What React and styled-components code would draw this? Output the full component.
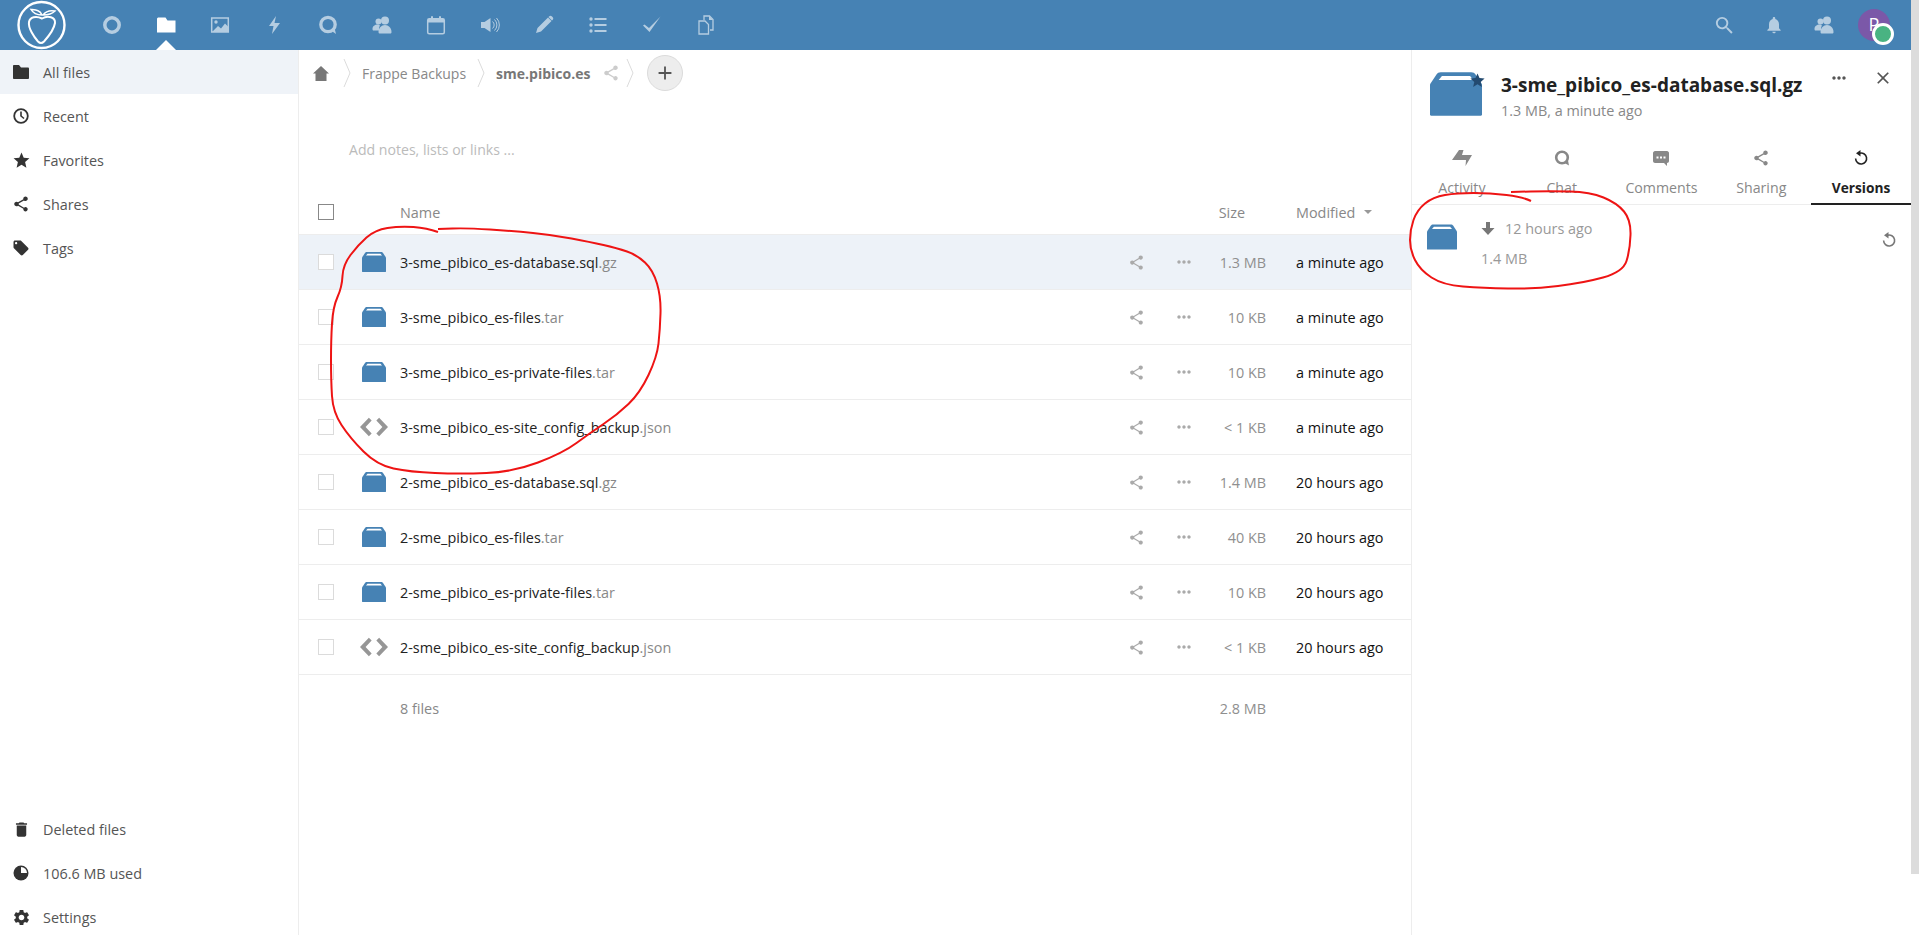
import styled, { createGlobalStyle } from "styled-components";
import {
  MdStar,
  MdShare,
  MdLocalOffer,
  MdDelete,
  MdSettings,
  MdMoreHoriz,
  MdClose,
  MdAdd,
  MdSearch,
  MdNotifications,
} from "react-icons/md";

const GlobalStyle = createGlobalStyle`
  html, body {
    margin: 0;
    padding: 0;
    background: #fff;
  }
  body {
    font-family: "Open Sans", "Noto Sans", sans-serif;
    font-size: 14.4px;
    color: #222;
  }
  * {
    box-sizing: border-box;
  }
`;

const files = [
  { name: "3-sme_pibico_es-database.sql", ext: ".gz", type: "archive", size: "1.3 MB", modified: "a minute ago", selected: true },
  { name: "3-sme_pibico_es-files", ext: ".tar", type: "archive", size: "10 KB", modified: "a minute ago" },
  { name: "3-sme_pibico_es-private-files", ext: ".tar", type: "archive", size: "10 KB", modified: "a minute ago" },
  { name: "3-sme_pibico_es-site_config_backup", ext: ".json", type: "code", size: "< 1 KB", modified: "a minute ago" },
  { name: "2-sme_pibico_es-database.sql", ext: ".gz", type: "archive", size: "1.4 MB", modified: "20 hours ago" },
  { name: "2-sme_pibico_es-files", ext: ".tar", type: "archive", size: "40 KB", modified: "20 hours ago" },
  { name: "2-sme_pibico_es-private-files", ext: ".tar", type: "archive", size: "10 KB", modified: "20 hours ago" },
  { name: "2-sme_pibico_es-site_config_backup", ext: ".json", type: "code", size: "< 1 KB", modified: "20 hours ago" },
];

// red pen marks, page coordinates
const fileLoop = [
  [438, 232], [427, 228], [400, 226], [375, 230], [358, 245], [343, 265], [342, 287], [333, 307],
  [331, 340], [331, 380], [333, 412], [350, 438], [377, 465], [410, 472], [460, 474], [513, 472],
  [563, 453], [590, 433], [617, 415], [640, 393], [657, 357], [660, 330], [661, 297], [653, 270],
  [637, 255], [617, 248], [590, 242], [553, 235], [513, 231], [467, 228], [438, 229],
];
const versionLoop = [
  [1531, 201], [1523, 197], [1490, 193], [1457, 193], [1433, 197], [1417, 210], [1410, 230], [1410, 250],
  [1420, 270], [1443, 285], [1483, 288], [1533, 289], [1583, 283], [1623, 272], [1630, 250], [1631, 220],
  [1617, 203], [1590, 192], [1550, 191], [1511, 192],
];

const smooth = (pts) => {
  let d = `M${pts[0][0]} ${pts[0][1]}`;
  for (let i = 1; i < pts.length - 1; i++) {
    const mx = (pts[i][0] + pts[i + 1][0]) / 2;
    const my = (pts[i][1] + pts[i + 1][1]) / 2;
    d += ` Q${pts[i][0]} ${pts[i][1]} ${mx} ${my}`;
  }
  const last = pts[pts.length - 1];
  return d + ` L${last[0]} ${last[1]}`;
};

const Logo = () => (
  <LogoSvg viewBox="17 0 50 50" fill="none" stroke="#fff" strokeWidth="2">
    <circle cx="41.5" cy="25" r="23" strokeWidth="2.4" />
    <path d="M42 18.5C36 15.5 30 17 29 22c-1 6 5 15 9 19.5 2 2 4 2 6 0 4-4.500 10-11.500 11-18.500.5-6-7-8-13-4.500z" />
    <path d="M42 15c-2-5-6-5-11-5.500 2 3.500 6 5.500 11 5.500zM43 15c3-4 7-5 12-4-3 3-7 4-12 4z" strokeWidth="1.5" />
  </LogoSvg>
);

const AppGlyph = ({ name }) => {
  switch (name) {
    case "dashboard":
      return <circle cx="10" cy="10" r="7.200" fill="none" stroke="currentColor" strokeWidth="3.500" />;
    case "files":
      return <path d="M2 2.500h7.500L11.500 5.500H19.500V17.500H1V3.500z" fill="currentColor" />;
    case "photos":
      return (
        <>
          <rect x="1.700" y="3" width="16.600" height="14" fill="none" stroke="currentColor" strokeWidth="1.500" />
          <circle cx="6" cy="7" r="1.700" fill="currentColor" />
          <path d="M2 17l6-6 3 2.500 4-5 3.500 3.500V17z" fill="currentColor" />
        </>
      );
    case "activity":
      return <path d="M12 1L5 11h4.500L8 19l8-11h-5.500z" fill="currentColor" />;
    case "talk":
      return (
        <>
          <circle cx="10" cy="9.500" r="7.200" fill="none" stroke="currentColor" strokeWidth="3.300" />
          <path d="M13 15.500l5 3.500-1.500-6z" fill="currentColor" />
        </>
      );
    case "contacts":
      return (
        <>
          <circle cx="6.500" cy="6.500" r="3" fill="currentColor" />
          <circle cx="13" cy="5.500" r="4" fill="currentColor" />
          <path d="M.5 14c0-3 2.500-4.500 5-4.500 1 0 2 .5 2.500 1-.5 1-1 2-1 3.500 0 .5 0 1 .5 1.500H1.500C1 15.500.5 15 .5 14z" fill="currentColor" />
          <path d="M6.500 17c0-4 3-7 6.500-7s6.500 3 6.500 7c0 1-.5 1.500-1.500 1.500H8c-1 0-1.500-.5-1.500-1.500z" fill="currentColor" />
        </>
      );
    case "calendar":
      return (
        <>
          <rect x="1.700" y="3.700" width="16.600" height="15" rx="1.500" fill="none" stroke="currentColor" strokeWidth="1.500" />
          <path d="M2 4h16v3.500H2z" fill="currentColor" />
          <rect x="5" y="1" width="2" height="5" rx="1" fill="currentColor" />
          <rect x="13" y="1" width="2" height="5" rx="1" fill="currentColor" />
        </>
      );
    case "announce":
      return (
        <>
          <path d="M1 7h3.500L10.500 3v14l-6-4H1z" fill="currentColor" />
          <path d="M12.500 6.500a4.500 4.500 0 0 1 0 7M14.500 4.500a7.500 7.500 0 0 1 0 11M16.500 3a10 10 0 0 1 0 14" fill="none" stroke="currentColor" strokeWidth="1" />
        </>
      );
    case "notes":
      return <path d="M14 2.500l3.500 3.500-10.500 10.500-5 1.500 1.500-5zM15 1.500c1-1 2-1 3 0l.5.500c1 1 1 2 0 3l-.5.500-3.500-3.500z" fill="currentColor" />;
    case "deck":
      return (
        <>
          <circle cx="3" cy="4" r="1.700" fill="currentColor" />
          <circle cx="3" cy="10" r="1.700" fill="currentColor" />
          <circle cx="3" cy="16" r="1.700" fill="currentColor" />
          <rect x="6.500" y="3" width="12" height="2" fill="currentColor" />
          <rect x="6.500" y="9" width="12" height="2" fill="currentColor" />
          <rect x="6.500" y="15" width="12" height="2" fill="currentColor" />
        </>
      );
    case "tasks":
      return <path d="M1 10.500l1.500-1 4.500 3.500L18.500 1.500 7.500 17z" fill="currentColor" />;
    case "documents":
      return (
        <>
          <path d="M3 6h6l3.500 3.500V19H3z" fill="none" stroke="currentColor" strokeWidth="1.300" />
          <path d="M8 5V1h5.500L17 4.500V15h-3" fill="none" stroke="currentColor" strokeWidth="1.300" />
          <path d="M13 1v4h4" fill="currentColor" />
        </>
      );
    default:
      return null;
  }
};

const apps = ["dashboard", "files", "photos", "activity", "talk", "contacts", "calendar", "announce", "notes", "deck", "tasks", "documents"];

const ArchiveIcon = ({ width, height }) => (
  <svg width={width} height={height} viewBox="0 0 24 20">
    <path d="M5 0h14c1 0 1.500.4 2 1l3 4.500V19.500c0 .3-.2.500-.5.500H.5c-.3 0-.5-.2-.5-.5V5.500L3 1c.5-.6 1-1 2-1z" fill="#4682b4" />
    <path d="M5.500 1.700h13l1.500 1.800H4z" fill="#fff" />
  </svg>
);

const CodeIcon = () => (
  <svg width="30" height="20" viewBox="0 0 30 20" fill="#969696">
    <path d="M9.500 0L0 10l9.500 10 3-3L6 10l6.500-7zM20.500 0L30 10l-9.500 10-3-3L24 10l-6.500-7z" />
  </svg>
);

const RestoreGlyph = ({ size = 16 }) => (
  <svg width={size} height={size} viewBox="0 0 16 16">
    <path d="M6.500 3.200A5.500 5.500 0 1 1 2.600 8.600" fill="none" stroke="currentColor" strokeWidth="1.600" />
    <path d="M7.500 0v6.500L3 3.300z" fill="currentColor" />
  </svg>
);

const ClockIcon = () => (
  <svg width="16" height="16" viewBox="0 0 16 16" fill="none" stroke="currentColor">
    <circle cx="8" cy="8" r="6.800" strokeWidth="1.800" />
    <path d="M8 3.500V8l3 2.500" strokeWidth="1.600" />
  </svg>
);

const FolderIcon = () => (
  <svg width="16" height="14" viewBox="0 0 16 14" fill="currentColor">
    <path d="M0 1c0-.5.400-1 1-1h5l2 2.500h7c.5 0 1 .5 1 1V13c0 .5-.5 1-1 1H1c-.6 0-1-.5-1-1z" />
  </svg>
);

const QuotaIcon = () => (
  <svg width="16" height="16" viewBox="0 0 16 16">
    <circle cx="8" cy="8" r="7.500" fill="currentColor" />
    <path d="M8 2a6 6 0 0 1 6 6H8z" fill="#fff" />
  </svg>
);

const navTop = [
  { label: "All files", icon: <FolderIcon />, active: true },
  { label: "Recent", icon: <ClockIcon /> },
  { label: "Favorites", icon: <MdStar size={19} /> },
  { label: "Shares", icon: <MdShare size={18} /> },
  { label: "Tags", icon: <MdLocalOffer size={18} /> },
];

const navBottom = [
  { label: "Deleted files", icon: <MdDelete size={19} /> },
  { label: "106.6 MB used", icon: <QuotaIcon /> },
  { label: "Settings", icon: <MdSettings size={19} /> },
];

const tabs = [
  {
    label: "Activity",
    icon: (
      <svg width="20" height="16" viewBox="0 0 20 16" fill="currentColor">
        <path d="M7 0h4.500L10 5h10l-6.500 11 .5-6H0z" />
      </svg>
    ),
  },
  {
    label: "Chat",
    icon: (
      <svg width="16" height="16" viewBox="0 0 16 16">
        <circle cx="8" cy="7.500" r="5.800" fill="none" stroke="currentColor" strokeWidth="2.600" />
        <path d="M10.500 13l4.500 2.500-1-5z" fill="currentColor" />
      </svg>
    ),
  },
  {
    label: "Comments",
    icon: (
      <svg width="16" height="15" viewBox="0 0 16 15">
        <path d="M2 0h12c1 0 2 1 2 2v8c0 1-1 2-2 2v3l-3-3H2c-1 0-2-1-2-2V2C0 1 1 0 2 0z" fill="currentColor" />
        <path d="M3.500 5.500h2v2h-2zM7 5.500h2v2H7zM10.500 5.500h2v2h-2z" fill="#fff" />
      </svg>
    ),
  },
  { label: "Sharing", icon: <MdShare size={18} /> },
  { label: "Versions", icon: <RestoreGlyph />, active: true },
];

const App = () => {
  return (
    <Page>
      <GlobalStyle />
      <TopBar>
        <AppNav>
          <Logo />
          <AppList>
            {apps.map((name) => (
              <AppItem key={name} $active={name === "files"}>
                <svg width="20" height="20" viewBox="0 0 20 20">
                  <AppGlyph name={name} />
                </svg>
              </AppItem>
            ))}
          </AppList>
        </AppNav>
        <UserNav>
          <UserItem><MdSearch size={23} /></UserItem>
          <UserItem><MdNotifications size={20} /></UserItem>
          <UserItem>
            <svg width="20" height="20" viewBox="0 0 20 20">
              <AppGlyph name="contacts" />
            </svg>
          </UserItem>
          <Avatar>
            P
            <StatusDot />
          </Avatar>
        </UserNav>
      </TopBar>

      <Body>
        <Sidebar>
          <NavList>
            {navTop.map((item) => (
              <NavItem key={item.label} $active={item.active}>
                <NavIcon>{item.icon}</NavIcon>
                {item.label}
              </NavItem>
            ))}
          </NavList>
          <NavFooter>
            {navBottom.map((item) => (
              <NavItem key={item.label}>
                <NavIcon>{item.icon}</NavIcon>
                {item.label}
              </NavItem>
            ))}
          </NavFooter>
        </Sidebar>

        <Main>
          <Breadcrumb>
            <Crumb>
              <HomeIcon width="16" height="15" viewBox="0 0 16 15">
                <path d="M8 0l8 7.500h-2.500V15h-11V7.500H0z" />
              </HomeIcon>
              <Chevron />
            </Crumb>
            <Crumb>
              <CrumbText>Frappe Backups</CrumbText>
              <Chevron />
            </Crumb>
            <Crumb>
              <CrumbText $current>sme.pibico.es</CrumbText>
              <CrumbShare><MdShare size={18} /></CrumbShare>
              <Chevron />
            </Crumb>
            <NewButton><MdAdd size={22} /></NewButton>
          </Breadcrumb>

          <Notes>Add notes, lists or links ...</Notes>

          <HeadRow>
            <HeadCheck />
            <span />
            <HeadLabel>Name</HeadLabel>
            <span />
            <span />
            <SizeHead>Size</SizeHead>
            <ModifiedHead>
              Modified
              <SortCaret />
            </ModifiedHead>
          </HeadRow>

          {files.map((file) => (
            <FileRow key={file.name} $selected={file.selected}>
              <RowCheck />
              <FileIconCell>
                {file.type === "code" ? <CodeIcon /> : <ArchiveIcon width={24} height={20} />}
              </FileIconCell>
              <FileName>
                {file.name}
                <FileExt>{file.ext}</FileExt>
              </FileName>
              <RowAction><MdShare size={17} /></RowAction>
              <RowAction><MdMoreHoriz size={20} /></RowAction>
              <FileSize>{file.size}</FileSize>
              <FileDate>{file.modified}</FileDate>
            </FileRow>
          ))}

          <SummaryRow>
            <span />
            <span />
            <SummaryText>8 files</SummaryText>
            <span />
            <span />
            <FileSize>2.8 MB</FileSize>
            <span />
          </SummaryRow>
        </Main>

        <Details>
          <DetailsHeader>
            <BigIcon>
              <ArchiveIcon width={52} height={44} />
              <BigStar><MdStar size={17} /></BigStar>
            </BigIcon>
            <DetailsTitle>
              <TitleText>3-sme_pibico_es-database.sql.gz</TitleText>
              <TitleSub>1.3 MB, a minute ago</TitleSub>
            </DetailsTitle>
            <HeaderActions>
              <HeaderAction><MdMoreHoriz size={20} /></HeaderAction>
              <HeaderAction><MdClose size={20} /></HeaderAction>
            </HeaderActions>
          </DetailsHeader>

          <TabBar>
            {tabs.map((tab) => (
              <Tab key={tab.label} $active={tab.active}>
                <TabIcon>{tab.icon}</TabIcon>
                <TabLabel>{tab.label}</TabLabel>
              </Tab>
            ))}
          </TabBar>

          <VersionRow>
            <VersionIcon>
              <ArchiveIcon width={30} height={26} />
            </VersionIcon>
            <VersionInfo>
              <VersionDate>
                <svg width="14" height="14" viewBox="0 0 14 14" fill="#777">
                  <path d="M5 1h4v6h4.500L7 14 .5 7H5z" />
                </svg>
                <span>12 hours ago</span>
              </VersionDate>
              <VersionSize>1.4 MB</VersionSize>
            </VersionInfo>
            <VersionRestore><RestoreGlyph /></VersionRestore>
          </VersionRow>
        </Details>
      </Body>

      <ScrollThumb />
      <PenMarks viewBox="0 0 1919 935" fill="none" stroke="#ee1414" strokeWidth="2">
        <path d={smooth(fileLoop)} />
        <path d={smooth(versionLoop)} />
      </PenMarks>
    </Page>
  );
};

export default App;

const Chevron = () => (
  <ChevronSvg width="8" height="28" viewBox="0 0 8 28" fill="none" stroke="#dbdbdb">
    <path d="M1 0l6 14-6 14" />
  </ChevronSvg>
);

const Page = styled.div`
  position: relative;
  width: 1919px;
  height: 935px;
  padding-right: 8px;
  overflow: hidden;
  display: flex;
  flex-direction: column;
`;

const TopBar = styled.header`
  height: 50px;
  flex-shrink: 0;
  background: #4682b4;
  display: flex;
  align-items: center;
  justify-content: space-between;
`;

const AppNav = styled.nav`
  display: flex;
  align-items: center;
  height: 100%;
`;

const LogoSvg = styled.svg`
  width: 50px;
  height: 50px;
  margin-left: 17px;
`;

const AppList = styled.div`
  display: flex;
  height: 100%;
  margin-left: 18px;
`;

const AppItem = styled.div`
  position: relative;
  width: 54px;
  display: flex;
  align-items: center;
  justify-content: center;
  color: ${(p) => (p.$active ? "#fff" : "#b5cde1")};

  ${(p) =>
    p.$active &&
    `
    &::after {
      content: "";
      position: absolute;
      left: 17px;
      bottom: 0;
      border: 10px solid transparent;
      border-top: 0;
      border-bottom-color: #fff;
    }
  `}
`;

const UserNav = styled.div`
  display: flex;
  align-items: center;
  padding-right: 21px;
`;

const UserItem = styled.div`
  width: 50px;
  display: flex;
  align-items: center;
  justify-content: center;
  color: #b5cde1;
`;

const Avatar = styled.div`
  position: relative;
  width: 32px;
  height: 32px;
  margin-left: 9px;
  border-radius: 50%;
  background: #7b58a8;
  color: #fff;
  font-size: 18px;
  line-height: 30px;
  text-align: center;
`;

const StatusDot = styled.span`
  position: absolute;
  right: -4px;
  bottom: -4px;
  width: 22px;
  height: 22px;
  border-radius: 50%;
  background: #49b382;
  border: 3px solid #fff;
`;

const Body = styled.div`
  flex: 1;
  min-height: 0;
  display: flex;
`;

const Sidebar = styled.aside`
  width: 299px;
  flex-shrink: 0;
  border-right: 1px solid #ededed;
  display: flex;
  flex-direction: column;
  justify-content: space-between;
`;

const NavList = styled.div`
  display: flex;
  flex-direction: column;
`;

const NavFooter = styled(NavList)`
  margin-bottom: -4px;
`;

const NavItem = styled.div`
  height: 44px;
  display: flex;
  align-items: center;
  color: #555;
  background: ${(p) => (p.$active ? "#eff3f8" : "transparent")};
`;

const NavIcon = styled.span`
  width: 43px;
  display: flex;
  justify-content: center;
  padding-right: 1px;
  color: #333;
`;

const Main = styled.main`
  flex: 1;
  min-width: 0;
`;

const Breadcrumb = styled.div`
  height: 46px;
  padding-left: 14px;
  display: flex;
  align-items: center;
  font-size: 14px;
`;

const Crumb = styled.div`
  display: flex;
  align-items: center;
`;

const HomeIcon = styled.svg`
  fill: #777;
  margin-right: 3px;
`;

const ChevronSvg = styled.svg`
  margin: 0 11px;
`;

const CrumbText = styled.span`
  color: ${(p) => (p.$current ? "#777" : "#888")};
  font-weight: ${(p) => (p.$current ? 700 : 400)};
`;

const CrumbShare = styled.span`
  display: flex;
  margin-left: 12px;
  margin-right: -5px;
  color: #ccc;
`;

const NewButton = styled.div`
  width: 36px;
  height: 36px;
  margin-left: 2px;
  border-radius: 50%;
  background: #ededed;
  border: 1px solid #dbdbdb;
  color: #555;
  display: flex;
  align-items: center;
  justify-content: center;
`;

const Notes = styled.div`
  height: 94px;
  padding: 43px 0 0 50px;
  line-height: 22px;
  color: #bbb;
  font-size: 14.1px;
`;

const rowColumns = `
  display: grid;
  grid-template-columns: 16px 66px 1fr 48px 48px 58px 145px;
  align-items: center;
  padding-left: 19px;
`;

const HeadRow = styled.div`
  ${rowColumns}
  height: 45px;
  border-bottom: 1px solid #ededed;
  color: #888;
`;

const HeadCheck = styled.span`
  width: 16px;
  height: 16px;
  border: 1px solid #888;
`;

const HeadLabel = styled.span``;

const SizeHead = styled.span`
  text-align: right;
  padding-right: 21px;
`;

const ModifiedHead = styled.span`
  padding-left: 30px;
  display: flex;
  align-items: center;
`;

const SortCaret = styled.span`
  margin-left: 9px;
  border: 4px solid transparent;
  border-bottom: 0;
  border-top-color: #999;
`;

const FileRow = styled.div`
  ${rowColumns}
  height: 55px;
  border-bottom: 1px solid #ededed;
  background: ${(p) => (p.$selected ? "#edf2f8" : "#fff")};
`;

const RowCheck = styled.span`
  width: 16px;
  height: 16px;
  border: 1px solid #dbdbdb;
  background: #fff;
`;

const FileIconCell = styled.span`
  width: 54px;
  padding-left: 26px;
  display: flex;
  justify-content: center;
`;

const FileName = styled.span`
  color: #222;
`;

const FileExt = styled.span`
  color: #888;
`;

const RowAction = styled.span`
  display: flex;
  justify-content: center;
  color: #aaa;
`;

const FileSize = styled.span`
  text-align: right;
  color: #8f8f8f;
  white-space: nowrap;
`;

const FileDate = styled.span`
  padding-left: 30px;
  color: #111;
  white-space: nowrap;
`;

const SummaryRow = styled.div`
  ${rowColumns}
  height: 66px;
`;

const SummaryText = styled.span`
  color: #888;
`;

const Details = styled.aside`
  width: 500px;
  flex-shrink: 0;
  border-left: 1px solid #ededed;
`;

const DetailsHeader = styled.div`
  height: 90px;
  padding: 22px 6px 0 18px;
  display: flex;
  align-items: flex-start;
`;

const BigIcon = styled.div`
  position: relative;
  width: 52px;
  height: 44px;
  margin-right: 19px;
  flex-shrink: 0;

  svg {
    display: block;
  }
`;

const BigStar = styled.span`
  position: absolute;
  top: 0;
  right: -4px;
  color: #234a70;
`;

const DetailsTitle = styled.div`
  min-width: 0;
`;

const TitleText = styled.div`
  font-size: 19px;
  font-weight: 700;
  line-height: 26px;
  color: #222;
  white-space: nowrap;
`;

const TitleSub = styled.div`
  margin-top: 3px;
  line-height: 20px;
  color: #888;
`;

const HeaderActions = styled.div`
  margin-left: auto;
  display: flex;
`;

const HeaderAction = styled.span`
  width: 44px;
  height: 12px;
  display: flex;
  align-items: center;
  justify-content: center;
  color: #555;
`;

const TabBar = styled.div`
  display: flex;
  border-bottom: 1px solid #ededed;
  height: 65px;
`;

const Tab = styled.div`
  flex: 1;
  height: 65px;
  padding-top: 9px;
  display: flex;
  flex-direction: column;
  align-items: center;
  border-bottom: 2px solid ${(p) => (p.$active ? "#222" : "transparent")};
  color: ${(p) => (p.$active ? "#222" : "#888")};
  font-weight: ${(p) => (p.$active ? 700 : 400)};
  font-size: ${(p) => (p.$active ? "13.7px" : "14.2px")};
`;

const TabIcon = styled.span`
  height: 18px;
  display: flex;
  align-items: center;
`;

const TabLabel = styled.span`
  margin-top: 11px;
  line-height: 20px;
`;

const VersionRow = styled.div`
  display: flex;
  align-items: flex-start;
  padding: 13px 14px 0 15px;
`;

const VersionIcon = styled.div`
  width: 30px;
  margin-top: 6px;
  margin-right: 24px;

  svg {
    display: block;
  }
`;

const VersionInfo = styled.div`
  display: flex;
  flex-direction: column;
  gap: 11px;
`;

const VersionDate = styled.div`
  height: 20px;
  display: flex;
  align-items: center;
  gap: 10px;
  color: #999;
`;

const VersionSize = styled.div`
  line-height: 20px;
  color: #999;
`;

const VersionRestore = styled.span`
  margin-left: auto;
  margin-top: 14px;
  color: #777;
  display: flex;
`;

const ScrollThumb = styled.div`
  position: absolute;
  top: 0;
  right: 0;
  width: 8px;
  height: 874px;
  background: #dcdcdc;
`;

const PenMarks = styled.svg`
  position: absolute;
  top: 0;
  left: 0;
  width: 1919px;
  height: 935px;
  pointer-events: none;
`;
